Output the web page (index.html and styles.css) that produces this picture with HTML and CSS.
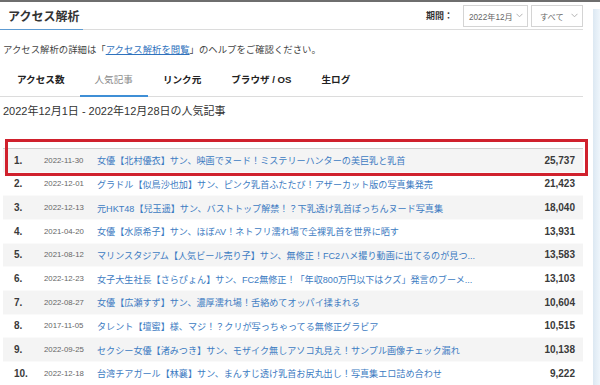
FILE: index.html
```html
<!DOCTYPE html>
<html lang="ja">
<head>
  <meta charset="UTF-8">
  <meta name="viewport" content="width=device-width, initial-scale=1.0">
  <title>アクセス解析</title>
  <link rel="stylesheet" href="styles.css">
</head>
<body>
  <div class="page">
    <main class="main">
      <header class="head">
        <h1 class="head-title">アクセス解析</h1>
        <div class="period">
          <span class="period-label">期間：</span>
          <div class="select select-month">
            <span>2022年12月</span>
            <svg class="chev" width="7" height="5" viewBox="0 0 7 5"><polyline points="0.5,0.8 3.5,3.8 6.5,0.8" fill="none" stroke="#aaa" stroke-width="0.9"/></svg>
          </div>
          <div class="select select-kind">
            <span>すべて</span>
            <svg class="chev" width="7" height="5" viewBox="0 0 7 5"><polyline points="0.5,0.8 3.5,3.8 6.5,0.8" fill="none" stroke="#aaa" stroke-width="0.9"/></svg>
          </div>
        </div>
      </header>

      <p class="help">アクセス解析の詳細は「<a href="#">アクセス解析を閲覧</a>」のヘルプをご確認ください。</p>

      <nav class="tabs">
        <a class="tab" href="#">アクセス数</a>
        <a class="tab active" href="#">人気記事</a>
        <a class="tab" href="#">リンク元</a>
        <a class="tab" href="#">ブラウザ / OS</a>
        <a class="tab" href="#">生ログ</a>
      </nav>

      <h2 class="range">2022年12月1日 - 2022年12月28日の人気記事</h2>

      <div class="ranking">
        <table>
          <tbody id="ranking-body">
            <!-- rows are filled in below -->
          </tbody>
        </table>
        <div class="highlight"></div>
      </div>
    </main>
    <aside class="side"></aside>
  </div>

  <script>
    const articles = [
      { date: '2022-11-30', title: '女優【北村優衣】サン、映画でヌード！ミステリーハンターの美巨乳と乳首', count: '25,737' },
      { date: '2022-12-01', title: 'グラドル【似鳥沙也加】サン、ピンク乳首ふたたび！アザーカット版の写真集発売', count: '21,423' },
      { date: '2022-12-13', title: '元HKT48【兒玉遥】サン、バストトップ解禁！？下乳透け乳首ぽっちんヌード写真集', count: '18,040' },
      { date: '2021-04-20', title: '女優【水原希子】サン、ほぼAV！ネトフリ濡れ場で全裸乳首を世界に晒す', count: '13,931' },
      { date: '2021-08-12', title: 'マリンスタジアム【人気ビール売り子】サン、無修正！FC2ハメ撮り動画に出てるのが見つ...', count: '13,583' },
      { date: '2022-12-23', title: '女子大生社長【さらぴょん】サン、FC2無修正！「年収800万円以下はクズ」発言のブーメ...', count: '13,103' },
      { date: '2022-08-27', title: '女優【広瀬すず】サン、濃厚濡れ場！舌絡めてオッパイ揉まれる', count: '10,604' },
      { date: '2017-11-05', title: 'タレント【壇蜜】様、マジ！？クリが写っちゃってる無修正グラビア', count: '10,515' },
      { date: '2022-09-25', title: 'セクシー女優【渚みつき】サン、モザイク無しアソコ丸見え！サンプル画像チェック漏れ', count: '10,138' },
      { date: '2022-12-18', title: '台湾チアガール【林襄】サン、まんすじ透け乳首お尻丸出し！写真集エロ詰め合わせ', count: '9,222' }
    ];

    document.getElementById('ranking-body').innerHTML = articles.map((a, i) => `
      <tr>
        <td class="rank">${i + 1}.</td>
        <td class="date">${a.date}</td>
        <td class="title"><a href="#">${a.title}</a></td>
        <td class="count">${a.count}</td>
      </tr>
    `).join('');
  </script>
</body>
</html>
```

FILE: styles.css
```css
body {
  margin: 0;
  padding: 0;
  background-color: #fff;
  font-family: "Liberation Sans", "Noto Sans CJK JP", sans-serif;
  color: #333;
}

a {
  text-decoration: none;
}

.page {
  display: flex;
  gap: 10px;
  border-top: 2px solid #6e6e6e;
}

.main {
  flex: 0 0 583px;
}

.side {
  flex: 1;
  margin-top: 7px;
  height: 380px;
  background: linear-gradient(to right, #dce8f2, #eef5fb);
}

/* header */
.head {
  display: flex;
  justify-content: space-between;
  align-items: center;
  height: 27px;
  border-bottom: 1px solid #dcdcdc;
}

.head-title {
  margin: 0 0 -1px 0;
  padding: 0 4px 0 8px;
  align-self: stretch;
  display: flex;
  align-items: center;
  font-size: 12px;
  font-weight: bold;
  color: #333;
  border-bottom: 1px solid #5d9bd2;
}

.period {
  display: flex;
  align-items: center;
  gap: 3px;
}

.period-label {
  font-size: 9px;
  font-weight: bold;
  color: #333;
  margin-right: 7px;
}

.select {
  display: flex;
  align-items: center;
  justify-content: space-between;
  height: 22px;
  padding: 0 4px 0 5px;
  border: 1px solid #d4d4d4;
  box-sizing: border-box;
  font-size: 8.2px;
  color: #666;
}

.select-month {
  width: 65px;
}

.select-kind {
  width: 52px;
  padding-left: 8px;
}

.chev {
  display: block;
}

/* help line */
.help {
  margin: 12px 0 0 0;
  padding-left: 3px;
  font-size: 9.4px;
  line-height: 16px;
  color: #444;
}

.help a {
  color: #2f72bd;
  text-decoration: underline;
}

/* tabs */
.tabs {
  display: flex;
  margin-top: 6px;
  padding-left: 2px;
  border-bottom: 1px solid #dcdcdc;
}

.tab {
  padding: 8px 15px 7px;
  font-size: 9.6px;
  line-height: 16px;
  font-weight: bold;
  color: #222;
  border-bottom: 2px solid transparent;
  margin-bottom: -1px;
}

.tab.active {
  font-weight: normal;
  color: #8a8a8a;
  border-bottom-color: #3f8fd6;
}

/* range heading */
.range {
  margin: 6px 0 0 0;
  padding-left: 3px;
  font-size: 11px;
  line-height: 16px;
  font-weight: normal;
  color: #333;
}

/* ranking table */
.ranking {
  position: relative;
  margin: 29px 0 0 3px;
}

table {
  width: 100%;
  border-collapse: collapse;
  border-top: 1px solid #cfcfcf;
}

tr {
  height: 23.67px;
}

tr:nth-child(odd) {
  background-color: #f4f4f4;
}

td {
  padding: 0;
  white-space: nowrap;
  border-bottom: 1px solid #fafafa;
}

.rank {
  width: 30px;
  padding-left: 11px;
  font-size: 10px;
  font-weight: bold;
  color: #3a3a3a;
}

.date {
  width: 40px;
  padding-right: 13px;
  font-size: 7.8px;
  color: #666;
}

.title {
  font-size: 9.1px;
}

.title a {
  color: #3c7bc2;
}

.count {
  width: 60px;
  padding-right: 8px;
  text-align: right;
  font-size: 10px;
  font-weight: bold;
  color: #3a3a3a;
}

/* annotation frame around the first row */
.highlight {
  position: absolute;
  left: 2px;
  top: -9px;
  width: 583px;
  height: 37px;
  box-sizing: border-box;
  border: 3px solid #d0212d;
  pointer-events: none;
}
```
